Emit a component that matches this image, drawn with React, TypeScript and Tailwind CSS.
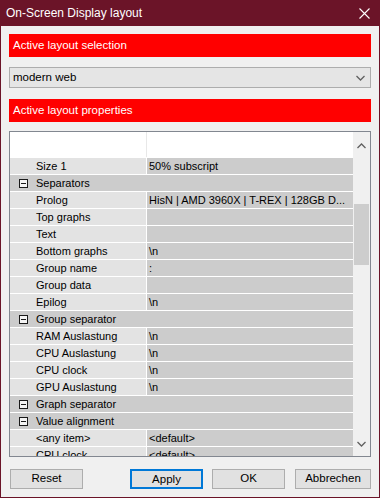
import React from 'react';

type Row =
  | { kind: 'cat'; label: string }
  | { kind: 'prop'; label: string; value: string };

const rows: Row[] = [
  { kind: 'prop', label: 'Size 1', value: '50% subscript' },
  { kind: 'cat', label: 'Separators' },
  { kind: 'prop', label: 'Prolog', value: 'HisN | AMD 3960X | T-REX | 128GB D...' },
  { kind: 'prop', label: 'Top graphs', value: '' },
  { kind: 'prop', label: 'Text', value: '' },
  { kind: 'prop', label: 'Bottom graphs', value: '\\n' },
  { kind: 'prop', label: 'Group name', value: ':' },
  { kind: 'prop', label: 'Group data', value: '' },
  { kind: 'prop', label: 'Epilog', value: '\\n' },
  { kind: 'cat', label: 'Group separator' },
  { kind: 'prop', label: 'RAM Auslastung', value: '\\n' },
  { kind: 'prop', label: 'CPU Auslastung', value: '\\n' },
  { kind: 'prop', label: 'CPU clock', value: '\\n' },
  { kind: 'prop', label: 'GPU Auslastung', value: '\\n' },
  { kind: 'cat', label: 'Graph separator' },
  { kind: 'cat', label: 'Value alignment' },
  { kind: 'prop', label: '<any item>', value: '<default>' },
  { kind: 'prop', label: 'CPU clock', value: '<default>' },
];

const Minus = () => (
  <span className="flex h-[9px] w-[9px] items-center justify-center border border-[#1a1a1a] bg-[#f4f4f4]">
    <span className="h-px w-[5px] bg-[#1a1a1a]" />
  </span>
);

const Chevron = ({ up }: { up?: boolean }) => (
  <svg width="9" height="6" viewBox="0 0 9 6" className={up ? '' : 'rotate-180'}>
    <path d="M0.5 5 L4.5 1 L8.5 5" fill="none" stroke="#606060" strokeWidth="1.3" />
  </svg>
);

const GridRow: React.FC<{ row: Row }> = ({ row }) => {
  if (row.kind === 'cat') {
    return (
      <div className="flex h-[17px] border-b border-white bg-[#cccccc]">
        <div className="flex w-[24px] items-center justify-center pl-[2px]">
          <Minus />
        </div>
        <span className="pl-[2px] leading-[16px]">{row.label}</span>
      </div>
    );
  }
  return (
    <div className="flex h-[17px] border-b border-white">
      <div className="flex w-[137px] border-r border-white bg-[#e3e3e3]">
        <span className="w-[26px]" />
        <span className="leading-[16px]">{row.label}</span>
      </div>
      <div className="flex-1 overflow-hidden whitespace-nowrap bg-[#cccccc] pl-[2px] leading-[16px]">{row.value}</div>
    </div>
  );
};

export default function App() {
  return (
    <div className="flex h-[498px] w-[380px] flex-col border-x border-b border-[#6b1428] bg-[#f0f0f0] font-['Liberation_Sans',Arial,sans-serif] text-[11.5px] text-black">
      <div className="-mx-px flex h-[26px] shrink-0 items-center justify-between bg-[#6b1428] pl-[6px] pr-[10px] text-white">
        <span className="text-[12px]">On-Screen Display layout</span>
        <svg width="11" height="11" viewBox="0 0 11 11">
          <path d="M0.5 0.5 L10.5 10.5 M10.5 0.5 L0.5 10.5" stroke="white" strokeWidth="1.1" />
        </svg>
      </div>

      <div className="flex flex-1 flex-col px-[8px]">
        <div className="mt-[8px] flex h-[23px] items-center bg-[#ff0000] pl-[4px] text-white">
          Active layout selection
        </div>

        <div className="mt-[10px] flex h-[21px] items-center justify-between border border-[#adadad] bg-[#e5e5e5] pl-[3px] pr-[5px]">
          <span>modern web</span>
          <Chevron />
        </div>

        <div className="mt-[11px] flex h-[23px] items-center bg-[#ff0000] pl-[4px] text-white">
          Active layout properties
        </div>

        <div className="mt-[9px] flex h-[326px] border border-[#828790] bg-[#f0f0f0] text-[11px]">
          <div className="flex-1 overflow-hidden">
            <div className="flex h-[26px] border-b border-white bg-white">
              <div className="w-[137px] border-r border-[#e8e8e8]" />
            </div>
            {rows.map((r, i) => (
              <GridRow key={i} row={r} />
            ))}
          </div>
          <div className="flex w-[17px] flex-col items-center bg-[#f0f0f0]">
            <div className="flex h-[17px] items-end justify-center">
              <Chevron up />
            </div>
            <div className="mt-[55px] h-[61px] w-[15px] bg-[#cdcdcd]" />
            <div className="flex-1" />
            <div className="mb-[4px] flex h-[17px] items-center justify-center">
              <Chevron />
            </div>
          </div>
        </div>

        <div className="mt-[12px] flex items-center">
          <button className="ml-[1px] h-[20px] w-[73px] border border-[#adadad] bg-[#e1e1e1]">Reset</button>
          <button className="ml-[47px] h-[20px] w-[73px] border-2 border-[#0078d7] bg-[#e1e1e1]">Apply</button>
          <button className="ml-[9px] h-[20px] w-[73px] border border-[#adadad] bg-[#e1e1e1]">OK</button>
          <button className="ml-[10px] h-[20px] w-[76px] border border-[#adadad] bg-[#e1e1e1]">Abbrechen</button>
        </div>
      </div>
    </div>
  );
}
